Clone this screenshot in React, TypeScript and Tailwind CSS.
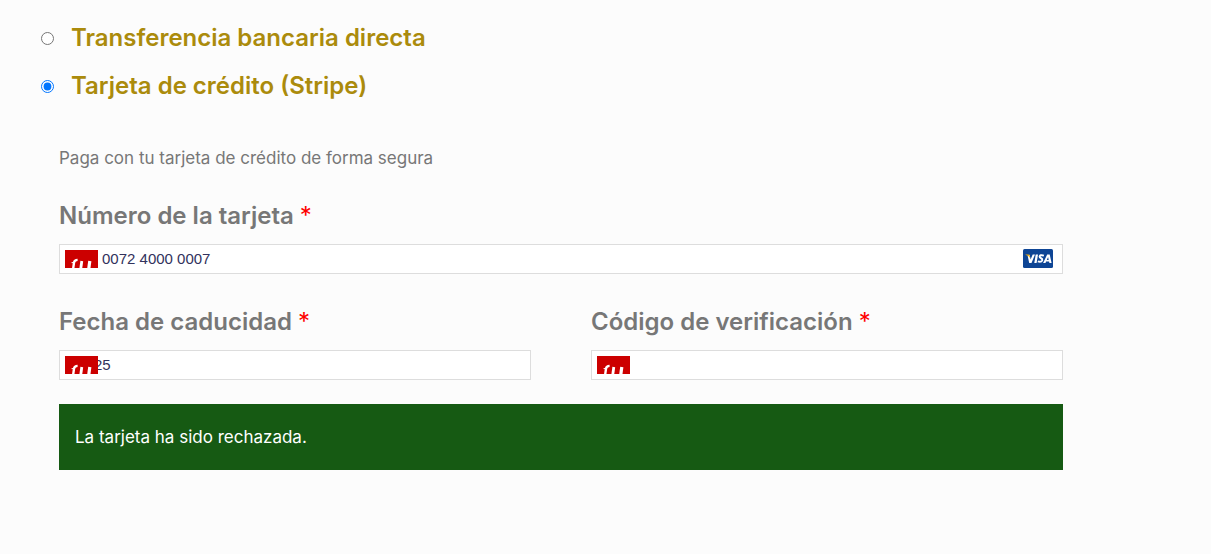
import { useState } from "react";

interface CardFieldProps {
  id: string;
  label: string;
  defaultValue?: string;
  inputClass: string;
  brand?: boolean;
}

const methods = [
  { id: "bacs", title: "Transferencia bancaria directa" },
  { id: "stripe", title: "Tarjeta de crédito (Stripe)" },
];

function FieldBadge() {
  return (
    <svg
      viewBox="0 0 33 18"
      aria-hidden="true"
      className="absolute left-1.5 top-1.5 w-[33px] h-[18px] pointer-events-none"
    >
      <rect width="33" height="18" fill="#cc0000" />
      <g fill="none" stroke="#fff">
        <path d="M8.2 18.5 L9 12.6 Q9.5 9.9 12.6 9.9" strokeWidth="2.4" />
        <path d="M6.6 12.6 H8.6" strokeWidth="1" />
        <path d="M16.8 11 L15.8 18.5" strokeWidth="2.8" />
        <path d="M24.8 11 L23.8 18.5" strokeWidth="3.2" />
      </g>
    </svg>
  );
}

function VisaLogo() {
  return (
    <svg
      viewBox="0 0 30 19"
      role="img"
      aria-label="Visa"
      className="absolute right-2.5 top-[5px] w-[30px] h-[19px]"
    >
      <rect width="30" height="19" rx="1.5" fill="#0e4595" />
      <g fill="#fff">
        <path d="M4.6 6.6 L6.6 5.8 L7.6 10.6 L9.7 5.4 H12 L8.5 13.9 H6.2 Z" />
        <path d="M12.7 5.4 H15 L13.6 13.9 H11.3 Z" />
        <path
          d="M24.2 5.4 H26.7 L28.6 13.9 H26.4 L26.1 12.5 H23.1 L22.5 13.9 H20.1 Z M25.1 8 L23.8 10.9 H25.7 Z"
          fillRule="evenodd"
        />
      </g>
      <path
        d="M20.9 6.6 Q17 5.5 16.6 7.6 Q16.6 8.7 18.1 9.3 Q19.6 9.9 19.2 11.3 Q18.2 13.6 14.8 12.4"
        fill="none"
        stroke="#fff"
        strokeWidth="2"
      />
      <path d="M2.4 5.4 H5.6 Q6.5 5.4 6.7 6.4 L7.3 9.2 Q5.8 6.7 2.4 5.8 Z" fill="#f2ae14" />
    </svg>
  );
}

function CardField({ id, label, defaultValue, inputClass, brand }: CardFieldProps) {
  return (
    <div>
      <label htmlFor={id} className="block mb-1 text-2xl/12 font-semibold text-[#777777]">
        {label} <span className="font-normal text-[#ff0000]">*</span>
      </label>
      <div className="relative">
        <input
          id={id}
          type="text"
          inputMode="numeric"
          autoComplete="off"
          defaultValue={defaultValue}
          className={`block w-full h-[30px] pb-0.5 border border-[#dddddd] bg-white font-['Liberation_Sans',sans-serif] text-[15px] text-[#32325d] outline-none ${inputClass}`}
        />
        <FieldBadge />
        {brand && <VisaLogo />}
      </div>
    </div>
  );
}

export default function App() {
  const [method, setMethod] = useState("stripe");

  return (
    <main className="min-h-screen bg-[#fcfcfc] pt-[14px] pb-20 font-[Inter,sans-serif]">
      <div className="pl-[41px]">
        {methods.map((m) => (
          <div key={m.id} className="flex items-center h-12 gap-[17px]">
            <input
              id={m.id}
              type="radio"
              name="payment_method"
              checked={method === m.id}
              onChange={() => setMethod(m.id)}
              className="size-[13px] accent-[#0075ff]"
            />
            <label htmlFor={m.id} className="text-2xl font-semibold text-[#ab8b0c]">
              {m.title}
            </label>
          </div>
        ))}
      </div>

      <div className="mt-9 ml-[59px] mr-[148px]">
        <p className="mb-[22px] text-[17px]/6 text-[#777777]">
          Paga con tu tarjeta de crédito de forma segura
        </p>

        <CardField
          id="card-number"
          label="Número de la tarjeta"
          defaultValue="0072 4000 0007"
          inputClass="pl-[42px] pr-12"
          brand
        />

        <div className="grid grid-cols-2 gap-[60px] mt-6">
          <CardField id="card-expiry" label="Fecha de caducidad" defaultValue="25" inputClass="pl-[34px]" />
          <CardField id="card-cvc" label="Código de verificación" inputClass="pl-[42px]" />
        </div>

        <div role="alert" className="mt-6 px-4 py-[21px] bg-[#165a13] text-[17px]/6 text-white">
          La tarjeta ha sido rechazada.
        </div>
      </div>
    </main>
  );
}
